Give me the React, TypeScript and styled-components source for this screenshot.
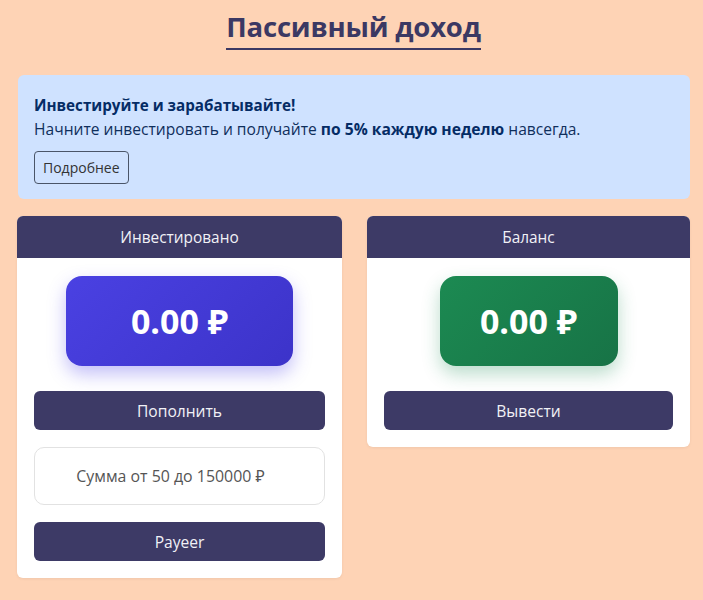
import React from "react";
import styled, { createGlobalStyle } from "styled-components";

const Global = createGlobalStyle`
  html, body { margin: 0; padding: 0; }
  body {
    background: #fed3b5;
    font-family: "Open Sans", "Noto Sans", sans-serif;
    color: #212529;
  }
`;

const Page = styled.div`
  padding: 8px 13px 20px 17px;
  display: flex;
  flex-direction: column;
  align-items: stretch;
`;

const TitleWrap = styled.div`
  display: flex;
  justify-content: center;
  margin-bottom: 25px;
`;

const Title = styled.h1`
  margin: 0;
  font-size: 27.5px;
  font-weight: 700;
  color: #3b3863;
  line-height: 38px;
  padding-bottom: 2px;
  border-bottom: 2px solid #3b3863;
  letter-spacing: -0.2px;
`;

const Alert = styled.div`
  background: #cfe2ff;
  color: #052c65;
  border-radius: 6px;
  padding: 20px 16px 15px 16px;
  margin: 0 0 17px 1px;
`;

const AlertTitle = styled.div`
  font-weight: 700;
  font-size: 15.2px;
  line-height: 20px;
`;

const AlertText = styled.div`
  font-size: 15.6px;
  line-height: 24px;
  margin-top: 2px;
  color: #0f2f5c;
  b { font-weight: 700; color: #052c65; }
`;

const OutlineButton = styled.button`
  margin-top: 10px;
  font-family: inherit;
  font-size: 14px;
  color: #333;
  background: transparent;
  border: 1px solid #4a5568;
  border-radius: 4px;
  height: 33px;
  padding: 0 8px;
  cursor: pointer;
`;

const Cards = styled.div`
  display: grid;
  grid-template-columns: 325px 323px;
  column-gap: 25px;
  align-items: start;
`;

const Card = styled.div`
  background: #fff;
  border-radius: 6px;
  overflow: hidden;
  box-shadow: 0 1px 3px rgba(0,0,0,0.06);
`;

const CardHeader = styled.div`
  background: #3d3a66;
  color: #f1f1f6;
  height: 42px;
  display: flex;
  align-items: center;
  justify-content: center;
  font-size: 15.4px;
`;

const CardBody = styled.div`
  padding: 18px 17px 17px 17px;
  display: flex;
  flex-direction: column;
  align-items: stretch;
`;

const Amount = styled.div<{ $variant: "blue" | "green"; $w: number }>`
  align-self: center;
  width: ${(p) => p.$w}px;
  height: 90px;
  border-radius: 16px;
  display: flex;
  align-items: center;
  justify-content: center;
  color: #fff;
  font-weight: 700;
  font-size: 34px;
  background: ${(p) =>
    p.$variant === "blue"
      ? "linear-gradient(135deg, #4a41e2 0%, #3c33c9 100%)"
      : "linear-gradient(135deg, #1c8a52 0%, #177346 100%)"};
  box-shadow: ${(p) =>
    p.$variant === "blue"
      ? "0 8px 18px rgba(84, 72, 235, 0.35)"
      : "0 8px 18px rgba(28, 138, 82, 0.3)"};
  margin-bottom: 25px;
`;

const DarkButton = styled.button`
  height: 39px;
  border: none;
  border-radius: 6px;
  background: #3d3a66;
  color: #f1f1f6;
  font-family: inherit;
  font-size: 15.6px;
  cursor: pointer;
`;

const AmountInput = styled.input`
  margin: 17px 0;
  height: 58px;
  box-sizing: border-box;
  border: 1px solid #e2e2e2;
  border-radius: 10px;
  padding: 0 18px 0 0;
  text-align: center;
  font-family: inherit;
  font-size: 15.9px;
  color: #444;
  outline: none;
  &::placeholder { color: #555; }
`;

export default function App() {
  return (
    <>
      <Global />
      <Page>
        <TitleWrap>
          <Title>Пассивный доход</Title>
        </TitleWrap>
        <Alert>
          <AlertTitle>Инвестируйте и зарабатывайте!</AlertTitle>
          <AlertText>
            Начните инвестировать и получайте <b>по 5% каждую неделю</b> навсегда.
          </AlertText>
          <OutlineButton>Подробнее</OutlineButton>
        </Alert>
        <Cards>
          <Card>
            <CardHeader>Инвестировано</CardHeader>
            <CardBody>
              <Amount $variant="blue" $w={227}>0.00 ₽</Amount>
              <DarkButton>Пополнить</DarkButton>
              <AmountInput placeholder="Сумма от 50 до 150000 ₽" />
              <DarkButton>Payeer</DarkButton>
            </CardBody>
          </Card>
          <Card>
            <CardHeader>Баланс</CardHeader>
            <CardBody>
              <Amount $variant="green" $w={178}>0.00 ₽</Amount>
              <DarkButton>Вывести</DarkButton>
            </CardBody>
          </Card>
        </Cards>
      </Page>
    </>
  );
}
